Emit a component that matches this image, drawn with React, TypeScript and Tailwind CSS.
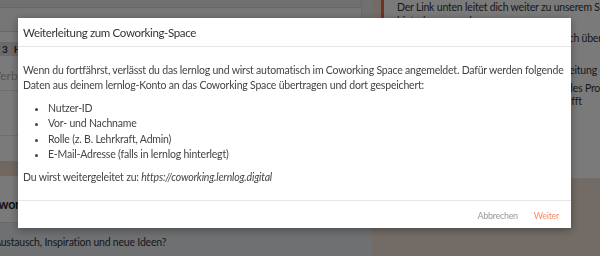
import React from "react";

const font = { fontFamily: "Lato, 'Liberation Sans', sans-serif" };

function Background() {
  return (
    <div className="flex h-[256px] w-[600px] overflow-hidden bg-[#e6d8cc] text-[#444]">
      <div className="flex w-[372px] shrink-0 flex-col bg-[#dce0e4]">
        <div className="mr-[10px] flex shrink-0 flex-col border-r border-[#d0d0d0] bg-[#f4f4f4]">
          <div className="h-[8px] border-b border-[#cfcfcf] bg-[#e0e0e0]" />
          <div className="h-[24px] border-b border-[#cfcfcf] bg-[#ececec]" />
          <div className="h-[10px]" />
          <div className="flex h-[14px] items-center gap-[6px] bg-[#d6d6d6] px-[2px] text-[10px] font-bold text-[#333]">
            <span>3</span>
            <span>H</span>
          </div>
          <div className="flex h-[35px] items-center border-b border-[#dcdcdc] pt-[6px] text-[12px] text-[#aaa]">
            <span className="-ml-[7px] whitespace-nowrap">Verbergen</span>
          </div>
          <div className="h-[45px] border-b border-[#dcdcdc]" />
          <div className="h-[25px]" />
        </div>
        <div className="h-[15px] shrink-0 bg-[#e2cfc2]" />
        <div className="flex h-[47px] shrink-0 items-center border-b border-[#d0d0d0] bg-[#f2f2f2] pt-[12px]">
          <span className="-ml-[16px] whitespace-nowrap text-[12.5px] font-bold tracking-[-0.3px] text-[#222]">Coworking</span>
        </div>
        <div className="flex h-[40px] shrink-0 items-center text-[10.5px] tracking-[-0.2px] text-[#333]">
          <span className="-ml-[32px] whitespace-nowrap">Mehr Austausch, Inspiration und neue Ideen?</span>
        </div>
      </div>
      <div className="flex flex-1 flex-col">
        <div className="ml-[9px] h-[178px] shrink-0 border-l-[3px] border-[#e8643a] bg-[#f4f4f4] pl-[13px] text-[10.5px] leading-[14px] tracking-[-0.2px] text-[#333]">
          <p className="whitespace-nowrap">Der Link unten leitet dich weiter zu unserem Support</p>
          <p className="whitespace-nowrap">hinterlegen werden</p>
          <p className="-ml-[3px] mt-[3px] whitespace-nowrap">Bei Fragen zum Coworking kannst du dich über</p>
          <p className="ml-[15px] mt-[18px] whitespace-nowrap">Hier findest du Hinweise zur Vorbereitung der Sitzung</p>
          <p className="ml-[21px] mt-[4px] whitespace-nowrap">Nach der vollständigen Erstellung des Profils</p>
          <p className="-mt-[1px] whitespace-nowrap">Damit ist der erste Schritt schon geschafft</p>
        </div>
      </div>
    </div>
  );
}

export default function App() {
  return (
    <div className="relative h-[256px] w-[600px] overflow-hidden" style={font}>
      <Background />
      <div className="fixed inset-0 bg-black/50">
        <div className="pl-[18px] pt-[18px]">
          <div className="flex h-[210px] w-[553px] flex-col bg-white shadow-[0_2px_8px_rgba(0,0,0,0.35)]">
            <div className="flex h-[29px] items-center border-b border-[#e5e5e5] px-[5px] pt-[1px] text-[11.5px] tracking-[-0.35px] text-[#333]">
              Weiterleitung zum Coworking-Space
            </div>
            <div className="flex-1 pl-[5px] pr-[3px] pt-[16px] text-[10.5px] leading-[15px] tracking-[-0.2px] text-[#444]">
              <p>
                Wenn du fortfährst, verlässt du das lernlog und wirst automatisch im Coworking Space angemeldet. Dafür werden folgende Daten aus deinem lernlog-Konto an das Coworking Space übertragen und dort gespeichert:
              </p>
              <ul className="mt-[8px] list-disc pl-[25px] leading-[15.3px]">
                <li>Nutzer-ID</li>
                <li>Vor- und Nachname</li>
                <li>Rolle (z. B. Lehrkraft, Admin)</li>
                <li>E-Mail-Adresse (falls in lernlog hinterlegt)</li>
              </ul>
              <p className="mt-[8px]">
                Du wirst weitergeleitet zu: <em>https://coworking.lernlog.digital</em>
              </p>
            </div>
            <div className="flex h-[28px] items-center justify-end gap-[16px] border-t border-[#e5e5e5] pr-[12px] pt-[2px] text-[9px] tracking-[-0.3px]">
              <span className="text-[#999]">Abbrechen</span>
              <span className="text-[#f4906a]">Weiter</span>
            </div>
          </div>
        </div>
      </div>
    </div>
  );
}
